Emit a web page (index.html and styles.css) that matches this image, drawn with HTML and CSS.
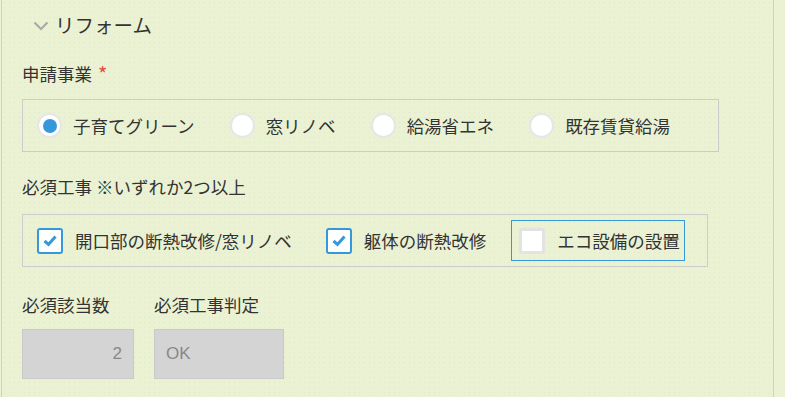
FILE: index.html
```html
<!DOCTYPE html>
<html lang="ja">
<head>
    <meta charset="UTF-8">
    <meta name="viewport" content="width=device-width, initial-scale=1.0">
    <title>リフォーム</title>
    <link rel="stylesheet" href="styles.css">
</head>
<body>
    <div class="panel">
        <div class="group-title">
            <svg class="chevron" width="16" height="10" viewBox="0 0 16 10">
                <path d="M1.5 1.5 L8 8 L14.5 1.5" fill="none" stroke="#a8a8a8" stroke-width="2"/>
            </svg>
            <span>リフォーム</span>
        </div>

        <div class="field">
            <div class="field-label">申請事業 <span class="required">*</span></div>
            <div class="choice-box radios">
                <label class="radio-item"><span class="radio checked"></span>子育てグリーン</label>
                <label class="radio-item"><span class="radio"></span>窓リノベ</label>
                <label class="radio-item"><span class="radio"></span>給湯省エネ</label>
                <label class="radio-item"><span class="radio"></span>既存賃貸給湯</label>
            </div>
        </div>

        <div class="field field-works">
            <div class="field-label">必須工事 ※いずれか2つ以上</div>
            <div class="choice-box checks">
                <label class="check-item"><span class="checkbox checked"><svg width="16" height="13" viewBox="0 0 16 13"><path d="M2.5 7 L6.5 10.5 L13.5 2.5" fill="none" stroke="#3498db" stroke-width="3"/></svg></span>開口部の断熱改修/窓リノベ</label>
                <label class="check-item"><span class="checkbox checked"><svg width="16" height="13" viewBox="0 0 16 13"><path d="M2.5 7 L6.5 10.5 L13.5 2.5" fill="none" stroke="#3498db" stroke-width="3"/></svg></span>躯体の断熱改修</label>
                <label class="check-item focused"><span class="checkbox"></span>エコ設備の設置</label>
            </div>
        </div>

        <div class="field-row">
            <div class="field small">
                <div class="field-label">必須該当数</div>
                <div class="readonly number">2</div>
            </div>
            <div class="field medium">
                <div class="field-label">必須工事判定</div>
                <div class="readonly">OK</div>
            </div>
        </div>
    </div>
</body>
</html>
```

FILE: styles.css
```css
body {
    margin: 0;
    padding: 0;
    background-color: #eaf2d3;
    font-family: "Noto Sans CJK JP", "Liberation Sans", sans-serif;
    color: #333;
}

.panel {
    box-sizing: border-box;
    width: 773px;
    height: 397px;
    margin-left: 1px;
    border-left: 1px solid #cfcfcf;
    border-right: 1px solid #cfcfcf;
    background-color: #eaf2d3;
    background-image: radial-gradient(rgba(150, 170, 120, 0.14) 0.6px, transparent 0.8px);
    background-size: 5px 5px;
}

.group-title {
    display: flex;
    align-items: center;
    padding-top: 13px;
    padding-left: 31px;
    height: 24px;
    font-size: 19.5px;
    line-height: 24px;
}

.chevron {
    margin-right: 6px;
    margin-top: 1px;
}

.field {
    padding-left: 20px;
    margin-top: 25px;
}

.field-label {
    font-size: 17.5px;
    line-height: 24px;
}

.required {
    color: #e74c3c;
    font-size: 20px;
    vertical-align: top;
    margin-left: 2px;
}

.choice-box {
    display: flex;
    align-items: center;
    box-sizing: border-box;
    border: 1px solid #cccccc;
}

.radios {
    width: 697px;
    height: 53px;
    margin-top: 13px;
    padding-left: 14px;
}

.radio-item {
    display: flex;
    align-items: center;
    font-size: 17.5px;
    margin-right: 35px;
}

.radio {
    position: relative;
    box-sizing: border-box;
    width: 25px;
    height: 25px;
    margin-right: 11px;
    border: 2px solid #e4e6ea;
    border-radius: 50%;
    background: #fff;
}

.radio.checked::after {
    content: "";
    position: absolute;
    left: 3.5px;
    top: 3.5px;
    width: 14px;
    height: 14px;
    border-radius: 50%;
    background: #3498db;
}

.field-works {
    margin-top: 23px;
}

.checks {
    width: 686px;
    height: 53px;
    margin-top: 15px;
    padding-left: 5px;
}

.check-item {
    display: flex;
    align-items: center;
    box-sizing: border-box;
    height: 41px;
    padding: 0 8px;
    border: 1px solid transparent;
    font-size: 17.5px;
    margin-right: 16px;
}

.check-item.focused {
    border-color: #3498db;
    padding-left: 7px;
    padding-right: 4px;
    margin-right: 0;
}

.checkbox {
    display: flex;
    align-items: center;
    justify-content: center;
    box-sizing: border-box;
    width: 26px;
    height: 26px;
    margin-right: 12px;
    border: 3px solid #e3e3e3;
    border-radius: 2px;
    background: #fff;
}

.checkbox.checked {
    border: 2px solid #3498db;
    border-radius: 3px;
}

.field-row {
    display: flex;
    margin-top: 26px;
}

.field-row .field {
    margin-top: 0;
}

.field-row .field.medium {
    padding-left: 20px;
}

.field-row .field-label {
    margin-bottom: 12px;
}

.readonly {
    box-sizing: border-box;
    height: 50px;
    border: 1px solid #c9c9c9;
    background-color: #d4d4d4;
    color: #888;
    font-family: "Liberation Sans", "Noto Sans CJK JP", sans-serif;
    font-size: 17px;
    line-height: 48px;
    padding: 0 11px;
}

.small .readonly {
    width: 112px;
}

.medium .readonly {
    width: 130px;
}

.readonly.number {
    text-align: right;
}
```
